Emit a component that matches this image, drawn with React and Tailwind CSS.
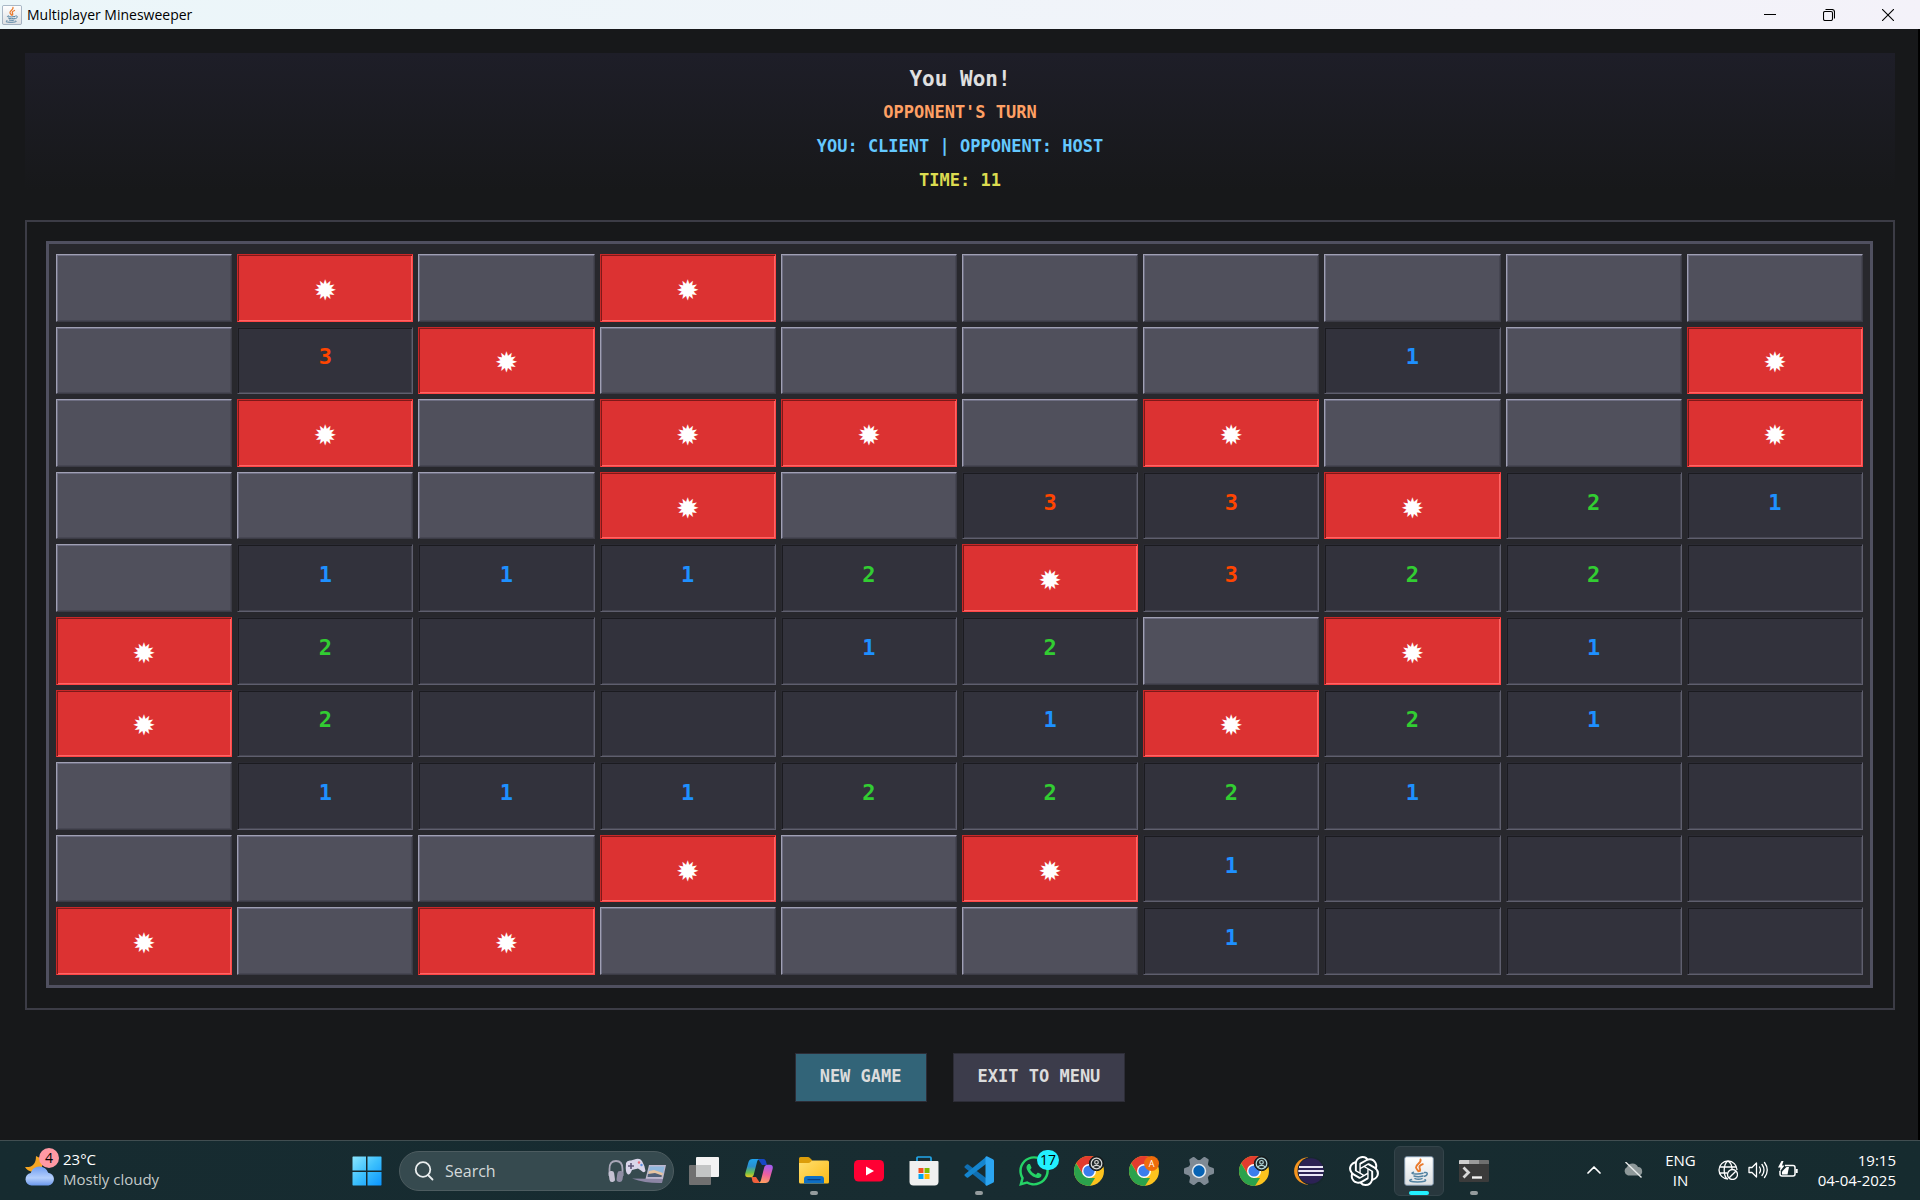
import React from "react";
import { SiOpenai } from "react-icons/si";
import { FaWhatsapp } from "react-icons/fa";

/* "." hidden, "0" opened and empty, "*" mine, digits are neighbour counts */
const BOARD = [
  ".*.*......",
  ".3*....1.*",
  ".*.**.*..*",
  "...*.33*21",
  ".1112*3220",
  "*20012.*10",
  "*20001*210",
  ".111222100",
  "...*.*1000",
  "*.*...1000",
];

const DIGIT = {
  1: "text-[#1e90ff]",
  2: "text-[#32cd32]",
  3: "text-[#ff4500]",
};

function Cell({ value, label }) {
  if (value === ".") {
    return (
      <button
        aria-label={label}
        className="min-h-6 border border-t-[#a0a0b4] border-l-[#a0a0b4] border-r-[#3c3c46] border-b-[#3c3c46] bg-[#50505c] shadow-[inset_1px_1px_0_#6e6e82,inset_-1px_-1px_0_#464652]"
      />
    );
  }
  if (value === "*") {
    return (
      <button
        aria-label={label}
        className="flex min-h-6 items-center justify-center border border-t-[#c82828] border-l-[#c82828] border-r-[#ff4646] border-b-[#ff4646] bg-[#dc3232] pt-1.5 font-['DejaVu_Sans'] text-[28px] leading-6 text-white shadow-[inset_1px_1px_0_#7d1919,inset_-1px_-1px_0_#ff6464]"
      >
        ✹
      </button>
    );
  }
  return (
    <button
      aria-label={label}
      className={`flex min-h-6 items-center justify-center border border-t-[#2a2a32] border-l-[#2a2a32] border-r-[#5f5f6e] border-b-[#5f5f6e] bg-[#32323c] pb-1.5 font-['DejaVu_Sans_Mono',monospace] text-[22px] leading-6 font-bold shadow-[inset_1px_1px_0_#1b1b20,inset_-1px_-1px_0_#464652] ${DIGIT[value] || ""}`}
    >
      {value === "0" ? "" : value}
    </button>
  );
}

function JavaIcon({ className }) {
  return (
    <svg viewBox="0 0 30 30" className={className}>
      <defs>
        <linearGradient id="java-tile" x1="0" y1="0" x2="0" y2="1">
          <stop offset="0" stopColor="#ffffff" />
          <stop offset="1" stopColor="#dcdfe2" />
        </linearGradient>
      </defs>
      <rect x="0.7" y="0.7" width="28.6" height="28.6" rx="2" fill="url(#java-tile)" stroke="#7e93a8" strokeWidth="1" />
      <g fill="none" stroke="#ea7a2c" strokeWidth="1.900" strokeLinecap="round">
        <path d="M16.500 3.500c1.300 3.500-4.800 4.700-4.500 8 .2 1.600 1.700 2.400 2.400 3.700" />
        <path d="M18.800 8.200c-2.800 1.100-4 2.200-3.100 3.900.5 1.100.8 1.800.1 3" />
      </g>
      <g fill="none" stroke="#5382a1" strokeWidth="1.500" strokeLinecap="round">
        <path d="M9.500 16.200c-2 .5-2 1.300-.1 1.500 3 .4 7 .3 9.600-.4" />
        <path d="M10 20c2.500.9 6.500.8 9 0M11 22.600c2.200.8 5 .7 7 0" />
        <path d="M20.500 16.500c3.800-.7 3.500 2.800 0 3.800" />
        <path d="M7.500 23.500c-4 1.300-.5 2.400 6 2.400 6.500 0 9.500-1 7.500-2.200" />
      </g>
    </svg>
  );
}

function Chrome({ id, badge }) {
  return (
    <svg viewBox="0 0 32 32" className="size-8 overflow-visible">
      <defs>
        <clipPath id={id}>
          <circle cx="16" cy="16" r="15" />
        </clipPath>
      </defs>
      <g clipPath={`url(#${id})`}>
        <rect width="32" height="32" fill="#fcc31e" />
        <path d="M0 0h32v9H16l-6 10.500L2 6z" fill="#e33b2e" />
        <path d="M2.500 7.500L10 19.500l6 3.500h6l-7.500 12L-2 32V4z" fill="#2ba24c" />
      </g>
      <circle cx="16" cy="16" r="7" fill="#fff" />
      <circle cx="16" cy="16" r="5.600" fill="#3b7ded" />
      {badge === "letter" ? (
        <>
          <circle cx="23.500" cy="8.500" r="7.500" fill="#ef6c0b" />
          <text x="23.500" y="12" textAnchor="middle" fontSize="9" fill="#fff" fontFamily="Open Sans, sans-serif">A</text>
        </>
      ) : (
        <g stroke={badge === "teal" ? "#b6dadb" : "#dadada"} fill="none">
          <circle cx="23.500" cy="8.500" r="7.200" fill="#20292b" stroke="#15191a" />
          <circle cx="23.500" cy="8.500" r="5.300" strokeWidth="1.200" />
          <circle cx="23.500" cy="7.300" r="1.800" strokeWidth="1.200" />
          <path d="M19.800 12c1.700-2.200 5.700-2.200 7.400 0" strokeWidth="1.200" />
        </g>
      )}
    </svg>
  );
}

function StartIcon() {
  return (
    <svg viewBox="0 0 30 30" className="size-[30px]">
      <defs>
        <linearGradient id="start" x1="0" y1="0" x2="1" y2="1">
          <stop offset="0" stopColor="#8be6ff" />
          <stop offset="0.5" stopColor="#3cc0fd" />
          <stop offset="1" stopColor="#0a94ff" />
        </linearGradient>
      </defs>
      <path fill="url(#start)" d="M1 .5h13v14H.5V1zM15.500.5H29l.5.500v13.500h-14zM.5 16H14v13.500H1L.5 29zM15.500 16h14v13l-.5.500H15.500z" />
    </svg>
  );
}

function TaskViewIcon() {
  return (
    <svg viewBox="0 0 30 28" className="h-7 w-[30px]">
      <rect x="0" y="8" width="22" height="20" rx="1" fill="#707070" />
      <rect x="7" y="0" width="23" height="20" rx="1" fill="#f3f3f3" />
      <rect x="7" y="8" width="15" height="12" fill="#c3c5c5" />
    </svg>
  );
}

function CopilotIcon() {
  return (
    <svg viewBox="0 0 28 26" className="h-[26px] w-7">
      <defs>
        <linearGradient id="cop-a" x1="0" y1="0" x2="0" y2="1">
          <stop offset="0" stopColor="#1fa4ee" />
          <stop offset="0.400" stopColor="#2b8fd0" />
          <stop offset="0.750" stopColor="#6cc04a" />
          <stop offset="1" stopColor="#f4c620" />
        </linearGradient>
        <linearGradient id="cop-b" x1="0.500" y1="0" x2="0.300" y2="1">
          <stop offset="0" stopColor="#a45cf0" />
          <stop offset="0.500" stopColor="#ee5f9e" />
          <stop offset="1" stopColor="#ffa25e" />
        </linearGradient>
      </defs>
      <path d="M13 1h5.500c1.500 0 2 1 2.400 2.300L22 7h-5z" fill="#1748c4" />
      <path d="M15 25H10c-1.500 0-2.300-1-2.700-2.300L6.500 19H11z" fill="#f0603c" />
      <path d="M7.500 1H15c-2 0-2.600 1.600-3 3L8.800 16.500C8.300 18.500 7 19.300 5.500 19.300H3C.5 19.300-.2 17.500.4 15L3.500 4C4.100 2 5.500 1 7.500 1z" fill="url(#cop-a)" />
      <path d="M20.500 25H13c2 0 2.600-1.600 3-3l3.200-12.500c.5-2 1.800-2.800 3.300-2.800H25c2.500 0 3.200 1.800 2.600 4.300l-3.100 11c-.6 2-2 3-4 3z" fill="url(#cop-b)" />
    </svg>
  );
}

function FolderIcon() {
  return (
    <svg viewBox="0 0 30 27" className="h-[27px] w-[30px]">
      <defs>
        <linearGradient id="folder" x1="0" y1="0" x2="1" y2="1">
          <stop offset="0" stopColor="#ffdf70" />
          <stop offset="1" stopColor="#fbbb16" />
        </linearGradient>
      </defs>
      <path d="M0 1.500Q0 0 1.500 0H9q1 0 1.700.7L13 3v5H0z" fill="#dc9d0a" />
      <path d="M0 6h9.500q1 0 1.800-.8L13 3.500h15.500Q30 3.500 30 5v20q0 1.500-1.500 1.500h-27Q0 26.500 0 25z" fill="url(#folder)" />
      <path d="M5 26.500V22q0-3 3-3h14q3 0 3 3v4.500z" fill="#0e6fc4" />
      <path d="M9 22.700h12" stroke="#083f83" strokeWidth="1.300" strokeLinecap="round" />
    </svg>
  );
}

function YouTubeIcon() {
  return (
    <svg viewBox="0 0 30 22" className="h-[22px] w-[30px]">
      <rect width="30" height="21.500" rx="4.500" fill="#ff0033" />
      <path d="M12 6.500v9l8-4.500z" fill="#fff" />
    </svg>
  );
}

function StoreIcon() {
  return (
    <svg viewBox="0 0 30 30" className="size-[30px]">
      <path d="M8 6V2q0-1 1-1h12q1 0 1 1v4" fill="none" stroke="#22a7ea" strokeWidth="1.700" />
      <path d="M.5 5.500Q.5 5 1.500 5h27q1 0 1 1v19.500q0 4-4 4h-21q-4 0-4-4z" fill="#f0f0f0" />
      <path d="M9.500 12h5v5h-5z" fill="#f25022" />
      <path d="M15.500 12h5v5h-5z" fill="#7fba00" />
      <path d="M9.500 18h5v5h-5z" fill="#00a4ef" />
      <path d="M15.500 18h5v5h-5z" fill="#ffb900" />
    </svg>
  );
}

function CodeIcon() {
  return (
    <svg viewBox="0 0 30 30" className="size-[30px]">
      <path d="M.7 10.300l2-1.800q.7-.6 1.500 0L22 22v7L.8 11.700q-.8-.7-.1-1.400z" fill="#0f6fb3" />
      <path d="M.7 19.700l2 1.800q.7.6 1.500 0L22 8V1L.8 18.300q-.8.7-.1 1.400z" fill="#1485cf" />
      <path d="M22 .5q.7-.5 1.400 0l5.600 2.700q1 .5 1 1.500v20.600q0 1-1 1.500l-5.600 2.700q-.7.500-1.400 0l-.5-.5V1z" fill="#2ba5f1" />
    </svg>
  );
}

function SettingsIcon() {
  return (
    <svg viewBox="0 0 30 30" className="size-[30px]">
      <g fill="#7f8a94">
        <circle cx="15" cy="15" r="11" />
        {[30, 90, 150].map((a) => (
          <path key={a} d="M12 .8q.3-.8 1.200-.8h3.600q.9 0 1.200.8L19.500 5v20L18 29.200q-.3.8-1.200.8h-3.600q-.9 0-1.200-.8L10.500 25V5z" transform={`rotate(${a} 15 15)`} />
        ))}
      </g>
      <circle cx="15" cy="15" r="7.200" fill="#e7edf2" />
      <circle cx="15" cy="15" r="5.700" fill="#0763b4" />
    </svg>
  );
}

function EclipseIcon() {
  return (
    <svg viewBox="0 0 30 28" className="h-7 w-[30px]">
      <path d="M14 .3C-4.500 2-4.500 26 14 27.700z" fill="#f7941e" />
      <circle cx="17.500" cy="14" r="14" fill="#17282e" />
      <circle cx="17" cy="14" r="12.800" fill="#2c2255" />
      <path d="M5 10h24M4.300 14h25.500M5 18h24" stroke="#e9e6f5" strokeWidth="2" />
    </svg>
  );
}

function TerminalIcon() {
  return (
    <svg viewBox="0 0 30 22" className="h-[22px] w-[30px]">
      <rect width="30" height="22" rx="1" fill="#3b3b3b" />
      <path d="M0 1q0-1 1-1h9v4H0z" fill="#d0d0d0" />
      <path d="M10 0h10v4H10z" fill="#9a9a9a" />
      <path d="M20 0h9q1 0 1 1v3H20z" fill="#6f6f6f" />
      <path d="M4.500 7.500l5 5-5 5" fill="none" stroke="#d8d8d8" strokeWidth="2.800" />
      <path d="M13 17.500h10" stroke="#f2f2f2" strokeWidth="2.400" />
    </svg>
  );
}

function WhatsAppIcon() {
  return (
    <span className="relative">
      <FaWhatsapp className="size-[34px] text-[#25d366]" />
      <span className="absolute -top-1 -right-2 flex h-5 w-[22px] items-center justify-center rounded-full bg-[#22f0ff] text-[14px] leading-5 text-black">17</span>
    </span>
  );
}

function SearchArt() {
  return (
    <svg viewBox="0 0 60 26" className="h-[26px] w-[60px]">
      <path d="M2.500 18V11q0-8 6.500-8t6.500 8v7" fill="none" stroke="#a9a7b8" strokeWidth="1.800" />
      <rect x="2" y="13" width="5.500" height="11" rx="2.600" fill="#c5c2d3" transform="rotate(-8 5 18)" />
      <rect x="10" y="13" width="6" height="11" rx="2.800" fill="#8e8ca3" transform="rotate(8 13 18)" />
      <path d="M19 5q1-3 5-2.500l5-1.500q4-1 6 2 3 5 3.500 10-1.500 2.500-4.500-.5l-3-2-6 1.500q-2 5-4 4.500-3-1-2-11.500z" fill="#d9d5ea" />
      <path d="M24 5v6M21 8h6" stroke="#5d5678" strokeWidth="1.600" />
      <circle cx="32" cy="4.500" r="1.200" fill="#e56a7a" />
      <circle cx="34.500" cy="7" r="1.200" fill="#5b8fe0" />
      <path d="M42 7h17l-3 14H38.500z" fill="#bdb8cf" />
      <path d="M43 8.500h14.500L55 19H40.500z" fill="#8fb7dd" />
      <path d="M42 13l5-1 9 3-1 4H40.500z" fill="#e6c4a2" />
      <path d="M41 16l7-1 7 2.500-.5 1.500h-14z" fill="#4f5f78" />
      <path d="M25 20.500l31 .5-1 4q-16 .5-30-4.500z" fill="#8c86a5" />
    </svg>
  );
}

const APPS = [
  { name: "Task view", icon: <TaskViewIcon /> },
  { name: "Copilot", icon: <CopilotIcon /> },
  { name: "File Explorer", icon: <FolderIcon />, open: true },
  { name: "YouTube", icon: <YouTubeIcon /> },
  { name: "Store", icon: <StoreIcon /> },
  { name: "Code editor", icon: <CodeIcon />, open: true },
  { name: "WhatsApp", icon: <WhatsAppIcon /> },
  { name: "Chrome", icon: <Chrome id="chrome-1" badge="gray" /> },
  { name: "Chrome, profile A", icon: <Chrome id="chrome-2" badge="letter" /> },
  { name: "Settings", icon: <SettingsIcon /> },
  { name: "Chrome, second profile", icon: <Chrome id="chrome-3" badge="teal" /> },
  { name: "Eclipse", icon: <EclipseIcon /> },
  { name: "ChatGPT", icon: <SiOpenai className="size-[30px] text-white" /> },
  { name: "Multiplayer Minesweeper", icon: <JavaIcon className="size-[30px]" />, active: true },
  { name: "Terminal", icon: <TerminalIcon />, open: true },
];

function TaskButton({ name, icon, open, active }) {
  return (
    <button
      aria-label={name}
      className={`relative flex size-[50px] items-center justify-center rounded-md ${active ? "border border-[#34444a] bg-[#28373d]" : ""}`}
    >
      {icon}
      {open && <span className="absolute bottom-px left-1/2 h-1 w-2 -translate-x-1/2 rounded-full bg-[#959c9e]" />}
      {active && <span className="absolute bottom-0 left-1/2 h-1 w-5 -translate-x-1/2 rounded-full bg-[#22f0ff]" />}
    </button>
  );
}

function WeatherIcon() {
  return (
    <svg viewBox="0 0 30 30" className="size-[30px]">
      <defs>
        <linearGradient id="cloud" x1="0" y1="0" x2="0" y2="1">
          <stop offset="0" stopColor="#6f9cf0" />
          <stop offset="0.600" stopColor="#b4cffc" />
          <stop offset="1" stopColor="#6a96ea" />
        </linearGradient>
      </defs>
      <path d="M11 0q8 3 6 11-3 6-9 5-6-1-8-5 11 1 11-11z" fill="#f5a623" />
      <path d="M6.500 29.500a6.300 6.300 0 0 1-.8-12.500 9 8.500 0 0 1 17.500-.2 6.400 6.400 0 0 1 .3 12.700z" fill="url(#cloud)" />
    </svg>
  );
}

function Taskbar() {
  return (
    <footer className="grid h-[60px] shrink-0 grid-cols-[342fr_auto_421fr] items-center border-t border-[#414e51] bg-linear-to-r from-[#162b30] via-[#182c31] to-[#162b2f] font-['Open_Sans',sans-serif] text-white">
      <div className="flex items-center gap-2 pb-1 pl-[25px]">
        <div className="relative pt-1">
          <WeatherIcon />
          <span className="absolute -top-1 -right-1 flex size-5 items-center justify-center rounded-full bg-[#ff99a4] text-[14px] text-black">4</span>
        </div>
        <div className="text-[15px] leading-5">
          <div>23°C</div>
          <div className="text-[#c4caca]">Mostly cloudy</div>
        </div>
      </div>
      <nav className="flex items-center gap-[5px]" aria-label="Taskbar">
        <TaskButton name="Start" icon={<StartIcon />} />
        <label className="ml-0.5 flex h-10 w-[275px] items-center rounded-full border border-[#4d5c60] bg-[#364a4f] pr-1.5 pl-3.5">
          <svg viewBox="0 0 20 20" className="size-5 shrink-0" fill="none" stroke="#e9edee" strokeWidth="1.800" strokeLinecap="round">
            <circle cx="9" cy="8.500" r="7.300" />
            <path d="M14 14l4.500 4.500" />
          </svg>
          <input
            aria-label="Search"
            placeholder="Search"
            className="ml-[11px] min-w-0 flex-1 bg-transparent text-base outline-none placeholder:text-[#d3d9da]"
          />
          <SearchArt />
        </label>
        {APPS.map((a) => (
          <TaskButton key={a.name} {...a} />
        ))}
      </nav>
      <div className="flex items-center justify-end pr-6 pb-0.5 text-[15px] leading-5">
        <button aria-label="Show hidden icons" className="mr-[22px]">
          <svg viewBox="0 0 14 8" className="h-2 w-3.5" fill="none" stroke="#fff" strokeWidth="1.700" strokeLinecap="round" strokeLinejoin="round">
            <path d="M1 7l6-6 6 6" />
          </svg>
        </button>
        <button aria-label="Cloud storage" className="mr-[22px]">
          <svg viewBox="0 0 20 16" className="h-4 w-5">
            <path d="M5 13.500A4.500 4.500 0 0 1 4 5.200 6 6 0 0 1 15 5a4.300 4.300 0 0 1 .8 8.500z" fill="#8e9899" />
            <path d="M2.500 0l16 15.500" stroke="#e7eaea" strokeWidth="1.400" />
          </svg>
        </button>
        <button className="mr-[22px] text-center">
          ENG
          <br />
          IN
        </button>
        <button aria-label="Network, sound and battery" className="mr-5 flex items-center gap-2.5">
          <svg viewBox="0 0 20 20" className="size-5" fill="none" stroke="#fff" strokeWidth="1.300">
            <path d="M10 19A9 9 0 1 1 19 10M9.500 19C5 16 5 4 10 1c3 2 4 5 4 8M1.500 7h17M1.500 13H9" />
            <circle cx="14.500" cy="14.500" r="5" />
            <path d="M11.200 17.800l6.600-6.600" />
          </svg>
          <svg viewBox="0 0 20 18" className="h-[18px] w-5" fill="none" stroke="#fff" strokeWidth="1.300" strokeLinejoin="round" strokeLinecap="round">
            <path d="M1 6.500h3L8.500 2v14L4 11.500H1zM11.500 6q2 3 0 6M14 3.500q4 5.500 0 11M16.500 1.500q5.500 7.500 0 15" />
          </svg>
          <svg viewBox="0 0 20 18" className="h-[18px] w-5" fill="none" stroke="#fff" strokeWidth="1.500">
            <path d="M7 4.500h8q2 0 2 2V13q0 2-2 2H4q-2 0-2-2v-3" />
            <path d="M18.700 8v4" strokeWidth="2" />
            <path d="M4 13.500V10.500L8.500 6H11L9.500 13.500z" fill="#fff" stroke="none" />
            <path d="M3.500 0L0 6.500h2.500L1.500 11 6.500 4.500H4L5.500 0z" fill="#fff" stroke="none" />
          </svg>
        </button>
        <div className="text-right">
          19:15
          <br />
          04-04-2025
        </div>
      </div>
    </footer>
  );
}

export default function App() {
  return (
    <div className="flex min-h-screen flex-col bg-[#17181a]">
      <header className="flex h-[29px] shrink-0 items-center bg-linear-to-r from-[#ebf6f9] to-[#f4f2f9] font-['Open_Sans',sans-serif] text-black">
        <JavaIcon className="ml-0.5 size-5" />
        <h1 className="ml-[5px] flex-1 text-[14px] leading-5">Multiplayer Minesweeper</h1>
        <div className="flex items-center gap-[47px] pr-[26px]">
          <button aria-label="Minimize">
            <svg viewBox="0 0 12 12" className="size-3" stroke="#000">
              <path d="M0 5.500h12" />
            </svg>
          </button>
          <button aria-label="Restore">
            <svg viewBox="0 0 12 12" className="size-3" fill="none" stroke="#000" strokeWidth="1.100">
              <rect x="0.500" y="2.500" width="9" height="9" rx="1.500" />
              <path d="M2.500.5H9q2.500 0 2.500 2.500v6.500" />
            </svg>
          </button>
          <button aria-label="Close">
            <svg viewBox="0 0 12 12" className="size-3" stroke="#000" strokeWidth="1.100">
              <path d="M0 0l12 12M12 0L0 12" />
            </svg>
          </button>
        </div>
      </header>

      <main className="flex flex-1 flex-col border-r-2 border-black px-[25px] pt-6 pr-[23px]">
        <section className="flex h-[137px] flex-col items-center bg-linear-to-b from-[#1e1e28] to-[#17181a] pt-2.5 font-['DejaVu_Sans_Mono',monospace] font-bold">
          <p className="text-[21px] leading-8 text-[#e0e0e0]">You Won!</p>
          <p className="text-[17px] leading-[34px] text-[#ffa064]">OPPONENT&apos;S TURN</p>
          <p className="text-[17px] leading-[34px] text-[#64c8ff]">YOU: CLIENT | OPPONENT: HOST</p>
          <p className="text-[17px] leading-[34px] text-[#dcdc50]">TIME: 11</p>
        </section>

        <section className="mt-[30px] flex flex-1 border-2 border-[#3c3c46] p-5 pt-[19px] pl-[19px]">
          <div className="grid flex-1 grid-cols-10 grid-rows-10 gap-[5px] border-3 border-[#505060] bg-[#28282d] px-[7px] py-2.5">
            {BOARD.flatMap((row, r) =>
              row.split("").map((v, c) => <Cell key={`${r}-${c}`} value={v} label={`Row ${r + 1}, column ${c + 1}`} />)
            )}
          </div>
        </section>

        <div className="mt-[43px] mb-[38px] flex justify-center gap-[26px] font-['DejaVu_Sans_Mono',monospace] text-[17px] leading-5 font-bold text-[#dcdcdc]">
          <button className="h-[49px] border border-[#2d2d37] bg-[#326478] px-6 pb-1">NEW GAME</button>
          <button className="h-[49px] border border-[#2d2d37] bg-[#3c3c4b] px-6 pb-1">EXIT TO MENU</button>
        </div>
      </main>

      <Taskbar />
    </div>
  );
}
